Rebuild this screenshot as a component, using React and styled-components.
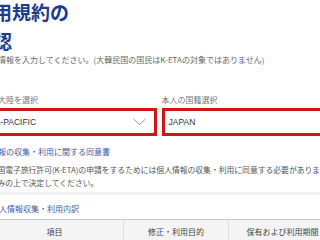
import React from "react";
import styled, { createGlobalStyle } from "styled-components";

const GlobalStyle = createGlobalStyle`
  html, body {
    margin: 0;
    padding: 0;
    background: #ffffff;
    overflow: hidden;
  }
  body {
    font-family: "Noto Sans CJK JP", "Noto Sans", sans-serif;
    color: #555;
  }
`;

const Page = styled.div`
  width: 370px;
  margin-left: -26px;
`;

const Title = styled.h1`
  margin: -3px 0 0;
  font-size: 19px;
  line-height: 29px;
  font-weight: 700;
  color: #1c3c8c;
`;

const Lead = styled.p`
  margin: -1px 0 0;
  font-size: 8px;
  line-height: 12px;
  color: #666;
  white-space: nowrap;
`;

const FieldRow = styled.div`
  display: grid;
  grid-template-columns: 1fr 1fr;
  column-gap: 5px;
  margin-top: 28px;
`;

const Field = styled.div`
  display: flex;
  flex-direction: column;
  gap: 2px;
`;

const Label = styled.span`
  font-size: 8px;
  line-height: 12px;
  color: #777;
  white-space: nowrap;
`;

const SelectBox = styled.div`
  height: 28px;
  box-sizing: border-box;
  border: 3px solid #d3131c;
  display: flex;
  align-items: center;
  justify-content: space-between;
  padding: 0 7px 0 4px;
  font-family: "Liberation Sans", "Noto Sans CJK JP", sans-serif;
  font-size: 8.5px;
  color: #333;
  background: #fff;
`;

const SectionTitle = styled.h2`
  margin: ${(p) => p.$top || 0}px 0 0;
  padding-left: ${(p) => p.$indent || 0}px;
  font-size: 8px;
  line-height: 12px;
  font-weight: 400;
  color: #3d5ca6;
  white-space: nowrap;
`;

const Body = styled.p`
  margin: 5px 0 0;
  font-size: 7.8px;
  line-height: 13px;
  color: #555;
  white-space: nowrap;
`;

const Separator = styled.hr`
  margin: 3px 0 0;
  border: none;
  border-top: 3px solid #f0f0f0;
  height: 0;
`;

const Breakdown = styled.section`
  margin-left: 12px;
  width: 350px;
`;

const Table = styled.div`
  margin-top: 4px;
  display: grid;
  grid-template-columns: 137px 105px 1fr;
  border-top: 1px solid #b9c9de;
`;

const HeadCell = styled.div`
  background: #f4f4f4;
  height: 22px;
  display: flex;
  align-items: center;
  justify-content: center;
  font-size: 8px;
  color: #444;
  border-left: ${(p) => (p.$first ? "none" : "1px solid #dedede")};
  padding-bottom: 2px;
  white-space: nowrap;
`;

const Chevron = () => (
  <svg width="15" height="8" viewBox="0 0 15 8">
    <polyline
      points="1.5,1 7.5,6.5 13.5,1"
      fill="none"
      stroke="#8a8a8a"
      strokeWidth="0.9"
    />
  </svg>
);

const App = () => {
  return (
    <>
      <GlobalStyle />
      <Page>
        <Title>
          利用規約の
          <br />
          確認
        </Title>
        <Lead>
          申請者情報を入力してください。(大韓民国の国民はK-ETAの対象ではありません)
        </Lead>

        <FieldRow>
          <Field>
            <Label>居住地大陸を選択</Label>
            <SelectBox>
              <span>ASIA-PACIFIC</span>
              <Chevron />
            </SelectBox>
          </Field>
          <Field>
            <Label>本人の国籍選択</Label>
            <SelectBox>
              <span>JAPAN</span>
            </SelectBox>
          </Field>
        </FieldRow>

        <SectionTitle $top={10}>個人情報の収集・利用に関する同意書</SectionTitle>
        <Body>
          大韓民国電子旅行許可(K-ETA)の申請をするためには個人情報の収集・利用に同意する必要があります。内容
          <br />
          をお読みの上で決定してください。
        </Body>
        <Separator />

        <Breakdown>
          <SectionTitle $top={8} $indent={5}>
            個人情報収集・利用内訳
          </SectionTitle>
          <Table>
            <HeadCell $first>項目</HeadCell>
            <HeadCell>修正・利用目的</HeadCell>
            <HeadCell>保有および利用期間</HeadCell>
          </Table>
        </Breakdown>
      </Page>
    </>
  );
};

export default App;
